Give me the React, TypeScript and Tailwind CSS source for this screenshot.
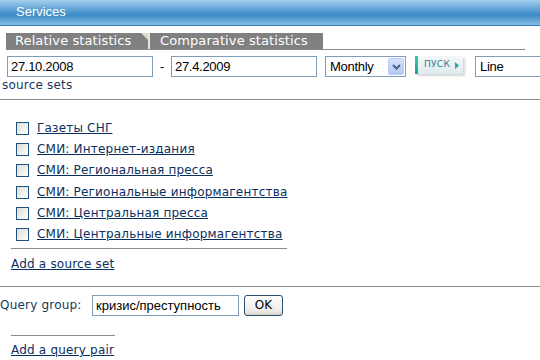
import React from "react";

const sources = [
  "Газеты СНГ",
  "СМИ: Интернет-издания",
  "СМИ: Региональная пресса",
  "СМИ: Региональные информагентства",
  "СМИ: Центральная пресса",
  "СМИ: Центральные информагентства",
];

const verdana = "font-['DejaVu_Sans',Verdana,sans-serif]";

export default function App() {
  return (
    <div className={`w-[540px] h-[360px] overflow-hidden bg-white ${verdana}`}>
      {/* header */}
      <div className="h-[26px] border-b border-[#2f7fbf] bg-[linear-gradient(to_bottom,#a4cfec,#5a9fd4_40%,#3b8bc7_60%,#86bce2)] pl-[16px] font-['Liberation_Sans',Arial,sans-serif] text-[13px] leading-[24px] text-white">
        Services
      </div>

      {/* tabs */}
      <div className="mt-[7px] ml-[6px] w-[519px] flex border-b border-[#8a8a8a] text-[13px] leading-[16px] tracking-[0.1px] text-white">
        <div className="relative w-[142px] shrink-0 bg-[#808080] pl-[9px]">
          Relative statistics
          <div className="absolute right-0 top-0 h-0 w-0 border-l-[7px] border-t-[7px] border-l-transparent border-t-[#dedad0]" />
        </div>
        <div className="w-[2px] shrink-0 bg-[#e8e4d8]" />
        <div className="w-[173px] shrink-0 bg-[#808080] pl-[10px] whitespace-nowrap">Comparative statistics</div>
      </div>

      {/* controls */}
      <div className="mt-[6px] flex items-start font-['Liberation_Sans',Arial,sans-serif] text-[13px] tracking-[-0.3px] text-black">
        <div className="ml-[7px] h-[21px] w-[146px] shrink-0 border border-[#7f9db9] pl-[3px] leading-[19px]">27.10.2008</div>
        <div className="w-[18px] shrink-0 text-center leading-[21px]">-</div>
        <div className="h-[21px] w-[146px] shrink-0 border border-[#7f9db9] pl-[3px] leading-[19px]">27.4.2009</div>
        <div className="ml-[8px] flex h-[21px] w-[81px] shrink-0 items-center border border-[#7f9db9] pl-[4px]">
          <span className="flex-1">Monthly</span>
          <span className="mr-[1px] flex h-[17px] w-[16px] items-center justify-center rounded-[2px] bg-[linear-gradient(to_bottom,#d6e2fb,#b3c8f5)] border border-[#b8ccf4]">
            <svg width="9" height="6" viewBox="0 0 9 6">
              <path d="M1 1 L4.5 4.5 L8 1" stroke="#4d6185" strokeWidth="2" fill="none" />
            </svg>
          </span>
        </div>
        <div className="ml-[9px] flex h-[18px] w-[48px] shrink-0 items-center bg-[linear-gradient(to_bottom,#f4f8fa,#dfe9ee)] shadow-[2px_2px_2px_#d6d6d6] font-['DejaVu_Sans',Verdana,sans-serif] tracking-normal">
          <span className="h-full w-[3px] bg-[linear-gradient(to_bottom,#3dc9a8,#17a489)]" />
          <span className="ml-[6px] text-[9px] tracking-[0.3px] text-[#2b7c92]">ПУСК</span>
          <svg className="ml-[5px]" width="4" height="7" viewBox="0 0 4 7">
            <path d="M0 0 L4 3.5 L0 7 Z" fill="#2aa39a" />
          </svg>
        </div>
        <div className="ml-[12px] h-[21px] w-[80px] shrink-0 border border-[#7f9db9] pl-[4px] leading-[19px]">Line</div>
      </div>

      <div className="ml-[2px] mt-[1px] text-[12px] leading-[15px] tracking-[0.2px] text-[#17375e]">source sets</div>

      <div className="mt-[6px] border-t border-[#8a8a8a]" />

      {/* source list */}
      <div className="ml-[11px] mt-[22px] tracking-[0.2px]">
        <div className="flex flex-col gap-[8.2px] pl-[5px]">
          {sources.map((s) => (
            <label key={s} className="flex items-center gap-[8px] whitespace-nowrap">
              <span className="h-[13px] w-[13px] shrink-0 border border-[#1c5180] bg-[linear-gradient(135deg,#dcdcd7,#ffffff)]" />
              <a href="#" className="text-[12px] leading-[13px] text-[#0b2f5e] underline">
                {s}
              </a>
            </label>
          ))}
        </div>
        <div className="mt-[7px] w-[276px] border-t border-[#8a8a8a]" />
        <a href="#" className="mt-[8px] block text-[12px] leading-[15px] text-[#0b2f5e] underline">
          Add a source set
        </a>
      </div>

      <div className="mt-[14px] border-t border-[#8a8a8a]" />

      {/* query group */}
      <div className="mt-[8px] flex items-center text-[12px] tracking-[0.2px] text-[#17375e]">
        <span className="w-[92px] shrink-0">Query group:</span>
        <div className="h-[21px] w-[147px] shrink-0 overflow-hidden whitespace-nowrap border border-[#7f9db9] pl-[3px] font-['Liberation_Sans',Arial,sans-serif] text-[13px] leading-[19px] tracking-normal text-black">
          кризис/преступность
        </div>
        <button className="ml-[5px] h-[21px] w-[39px] shrink-0 rounded-[3px] border border-[#2f4f6f] bg-[linear-gradient(to_bottom,#ffffff,#ecebe6_80%,#d6d0c5)] text-[12px] text-black">
          OK
        </button>
      </div>

      <div className="ml-[11px] mt-[19px] w-[104px] border-t border-[#8a8a8a]" />
      <a href="#" className="ml-[11px] mt-[7px] block text-[12px] leading-[15px] tracking-[0.2px] text-[#0b2f5e] underline">
        Add a query pair
      </a>
    </div>
  );
}
